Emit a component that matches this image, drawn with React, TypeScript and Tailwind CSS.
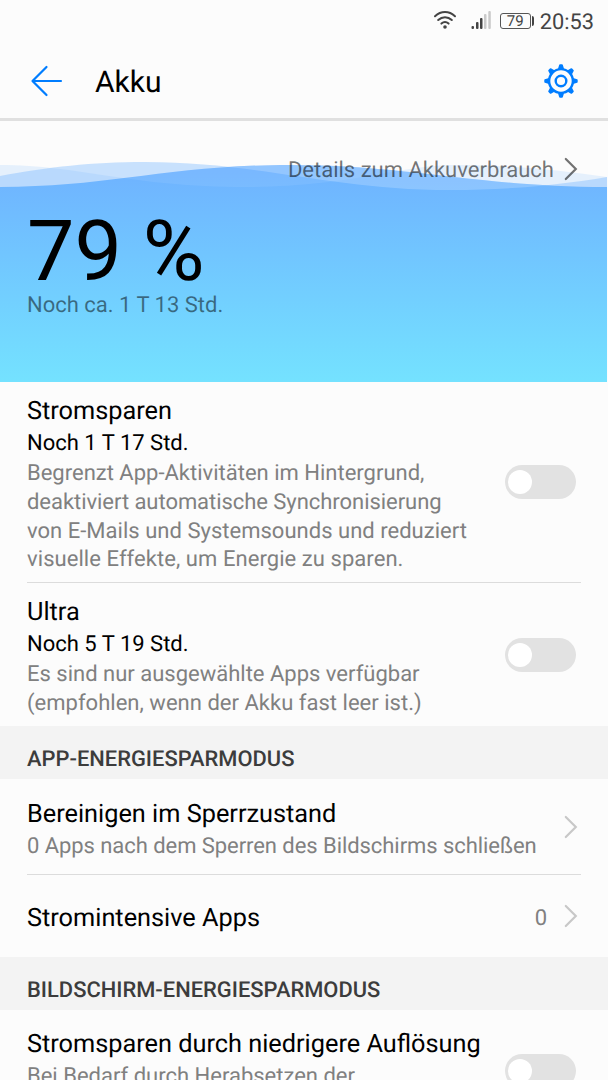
import type { ReactNode } from "react";

function Chevron({ className }: { className: string }) {
  return (
    <svg width="14" height="24" viewBox="0 0 14 24" fill="none" className={className}>
      <path d="M1.8 2 L11.8 12 L1.8 22" stroke="currentColor" strokeWidth="2.2" strokeLinecap="round" />
    </svg>
  );
}

function Toggle() {
  return (
    <div className="flex h-[34px] w-[71px] shrink-0 items-center rounded-full bg-[#e2e2e2] pl-[3px]">
      <div className="size-6 rounded-full bg-white" />
    </div>
  );
}

function SectionHeader({ children }: { children: ReactNode }) {
  return (
    <h2 className="h-[53px] shrink-0 bg-[#f3f3f3] px-[27px] pt-[17px] text-[21.9px] leading-[34px] font-medium text-[#3c3c3c]">
      {children}
    </h2>
  );
}

function StatusBar() {
  return (
    <div className="flex h-[42px] shrink-0 items-center justify-end pr-[14px] text-[#444]">
      <svg width="24" height="20" viewBox="0 0 24 20" fill="none" stroke="currentColor" strokeWidth="2" strokeLinecap="round">
        <path d="M2 5.2 C8 -0.4 16 -0.4 22 5.2" />
        <path d="M5.2 9 C9.2 5.2 14.8 5.2 18.8 9" />
        <path d="M8.4 12.6 C10.6 10.6 13.4 10.6 15.6 12.6" />
        <circle cx="12" cy="16" r="1.8" fill="currentColor" stroke="none" />
      </svg>
      <svg width="21" height="20" viewBox="0 0 21 20" className="ml-[14px]" fill="currentColor">
        <rect x="0.5" y="15" width="2.5" height="3" rx="1" />
        <rect x="5" y="11" width="2.5" height="7" rx="1" />
        <rect x="9" y="7" width="2.5" height="11" rx="1" />
        <rect x="13" y="3" width="2.5" height="15" rx="1" fill="#cacaca" />
        <rect x="17.3" y="0" width="2.5" height="18" rx="1" fill="#cacaca" />
      </svg>
      <div className="ml-[8px] flex h-4 w-[31px] items-center justify-center rounded-[3px] border border-[#555] text-[15px] leading-none">
        79
      </div>
      <div className="ml-px h-[10px] w-[2px] rounded-r-sm bg-[#444]" />
      <span className="ml-[6px] pt-[3px] text-[21.8px] leading-[39px]">20:53</span>
    </div>
  );
}

const teeth = [0, 45, 90, 135, 180, 225, 270, 315];

function Toolbar() {
  return (
    <header className="flex h-[79px] shrink-0 items-center border-b-[3px] border-[#e0e0e0] pt-[2px] pr-[29px] pl-[30px]">
      <svg width="34" height="34" viewBox="0 0 34 34" fill="none" stroke="#007dff" strokeWidth="2.2" strokeLinecap="round" strokeLinejoin="round">
        <path d="M16.5 3 L2.5 17 L16.5 31 M3 17 H31" />
      </svg>
      <h1 className="ml-[31px] flex-1 pt-[3px] text-[30px] leading-[36px] text-black">Akku</h1>
      <svg width="36" height="36" viewBox="0 0 36 36" fill="none" stroke="#007dff">
        <circle cx="18" cy="18" r="11.9" strokeWidth="2.4" />
        <circle cx="18" cy="18" r="5.3" strokeWidth="2.4" />
        {teeth.map((a) => (
          <path key={a} d="M17 2.2 H19 L20 5.4 H16 Z" fill="#007dff" strokeWidth="1.8" strokeLinejoin="round" transform={`rotate(${a} 18 18)`} />
        ))}
      </svg>
    </header>
  );
}

const crest = "M0 65 C110 65 170 43 290 43 C410 43 480 65 607 65";
const middle = "M0 54 C50 45 90 40 145 40 C260 40 330 68 450 68 C510 68 560 63 607 55";
const faint = "M0 43 C80 43 130 65 245 65 C350 65 400 43 455 43 C510 43 560 48 607 55";

function Waves() {
  return (
    <svg width="608" height="260" viewBox="0 0 608 260" className="absolute inset-0">
      <defs>
        <linearGradient id="water" gradientUnits="userSpaceOnUse" x1="0" y1="50" x2="0" y2="260">
          <stop offset="0" stopColor="#6fb3ff" />
          <stop offset="1" stopColor="#74e2ff" />
        </linearGradient>
        <clipPath id="crest">
          <path d={`${crest} V260 H0 Z`} />
        </clipPath>
      </defs>
      <path d={`${faint} V80 H0 Z`} fill="#6fb3ff" fillOpacity="0.16" />
      <path d={`${middle} V80 H0 Z`} fill="#6fb3ff" fillOpacity="0.37" />
      <path d={`${crest} V260 H0 Z`} fill="url(#water)" />
      <g clipPath="url(#crest)" fill="#ffffff">
        <path d={`${middle} V0 H0 Z`} fillOpacity="0.2" />
        <path d={`${faint} V0 H0 Z`} fillOpacity="0.07" />
      </g>
    </svg>
  );
}

function Hero() {
  return (
    <section className="relative mt-px h-[260px] shrink-0">
      <Waves />
      <div className="relative flex flex-col pr-[30px] pl-[27px]">
        <div className="mt-[30px] flex h-[34px] items-center justify-end text-black/55">
          <span className="pt-[4px] text-[22px] leading-[32px]">Details zum Akkuverbrauch</span>
          <Chevron className="ml-[10px]" />
        </div>
        <div className="mt-[24px] text-[84.4px] leading-[84px] text-black">79 %</div>
        <div className="text-[22px] leading-[24px] text-black/50">Noch ca. 1 T 13 Std.</div>
      </div>
    </section>
  );
}

type Line = { text: string; tracking?: string };

function ModeRow({ title, remaining, lines, last }: { title: string; remaining: string; lines: Line[]; last?: boolean }) {
  return (
    <div className="mr-[27px] ml-[27px] shrink-0">
      <div className={last ? "flex h-[143px] items-center pr-[5px]" : "flex h-[201px] items-center border-b border-[#dcdcdc] pr-[5px]"}>
        <div className="flex-1 pt-[6px] whitespace-nowrap">
          <div className="text-[25.3px] leading-[33px] text-black">{title}</div>
          <div className="text-[22px] leading-[31px] text-black">{remaining}</div>
          <div className="pt-px text-[22px] leading-[28.7px] text-[#808080]">
            {lines.map((l) => (
              <div key={l.text} className={l.tracking}>
                {l.text}
              </div>
            ))}
          </div>
        </div>
        <Toggle />
      </div>
    </div>
  );
}

export default function App() {
  return (
    <div className="flex h-[1080px] w-[608px] flex-col overflow-hidden bg-[#fcfcfc] font-['Roboto',sans-serif] [text-rendering:geometricPrecision]">
      <StatusBar />
      <Toolbar />
      <Hero />
      <ModeRow
        title="Stromsparen"
        remaining="Noch 1 T 17 Std."
        lines={[
          { text: "Begrenzt App-Aktivitäten im Hintergrund," },
          { text: "deaktiviert automatische Synchronisierung", tracking: "tracking-[-0.05px]" },
          { text: "von E-Mails und Systemsounds und reduziert", tracking: "tracking-[0.02px]" },
          { text: "visuelle Effekte, um Energie zu sparen.", tracking: "tracking-[0.06px]" },
        ]}
      />
      <ModeRow
        title="Ultra"
        remaining="Noch 5 T 19 Std."
        lines={[
          { text: "Es sind nur ausgewählte Apps verfügbar" },
          { text: "(empfohlen, wenn der Akku fast leer ist.)", tracking: "tracking-[0.02px]" },
        ]}
        last
      />
      <SectionHeader>APP-ENERGIESPARMODUS</SectionHeader>
      <div className="mx-[27px] flex h-[96px] shrink-0 items-center border-b border-[#dcdcdc] pr-[3px]">
        <div className="flex-1 pt-[5px] whitespace-nowrap">
          <div className="text-[25.3px] leading-[34px] text-black">Bereinigen im Sperrzustand</div>
          <div className="text-[22px] leading-[29px] tracking-[-0.06px] text-[#808080]">0 Apps nach dem Sperren des Bildschirms schließen</div>
        </div>
        <Chevron className="text-[#c8c8c8]" />
      </div>
      <div className="mx-[27px] flex h-[82px] shrink-0 items-center pr-[3px]">
        <div className="flex-1 pt-[5px] text-[25.3px] leading-[34px] text-black">Stromintensive Apps</div>
        <span className="mr-[17px] pt-[4px] text-[22px] leading-[29px] text-[#808080]">0</span>
        <Chevron className="text-[#c8c8c8]" />
      </div>
      <SectionHeader>BILDSCHIRM-ENERGIESPARMODUS</SectionHeader>
      <div className="flex shrink-0 items-start pt-[17px] pr-[32px] pl-[27px]">
        <div className="flex-1 pt-px whitespace-nowrap">
          <div className="text-[25.3px] leading-[34px] text-black">Stromsparen durch niedrigere Auflösung</div>
          <div className="text-[22px] leading-[29px] text-[#808080]">Bei Bedarf durch Herabsetzen der</div>
        </div>
        <div className="pt-[27px]">
          <Toggle />
        </div>
      </div>
    </div>
  );
}
